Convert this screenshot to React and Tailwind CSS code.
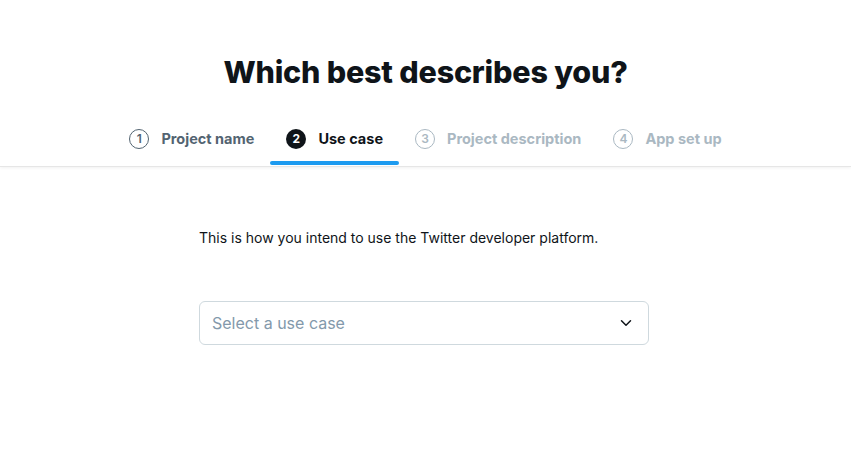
import { ChevronDown } from 'lucide-react';

const steps = [
  { n: 1, label: 'Project name', state: 'done' },
  { n: 2, label: 'Use case', state: 'active' },
  { n: 3, label: 'Project description', state: 'todo' },
  { n: 4, label: 'App set up', state: 'todo' },
];

function Step({ n, label, state }) {
  const active = state === 'active';
  const text = active ? 'text-[#0f1419]' : state === 'done' ? 'text-[#536471]' : 'text-[#aab8c2]';
  return (
    <div className="relative flex items-center gap-3 px-4 h-[54px]">
      {active ? (
        <span className="w-5 h-5 rounded-full bg-[#0f1419] text-white text-[12px] font-bold flex items-center justify-center">
          {n}
        </span>
      ) : (
        <span className={`w-5 h-5 rounded-full border-[1.5px] text-[12px] font-semibold flex items-center justify-center ${state === 'done' ? 'border-[#536471] text-[#536471]' : 'border-[#aab8c2] text-[#aab8c2]'}`}>
          {n}
        </span>
      )}
      <span className={`text-[14.5px] font-bold ${text}`}>{label}</span>
      {active && <div className="absolute left-0 right-0 bottom-[1px] h-[4px] rounded-full bg-[#1d9bf0]" />}
    </div>
  );
}

export default function App() {
  return (
    <div className="min-h-screen bg-white font-['Inter',sans-serif]">
      {/* Header */}
      <div className="border-b border-[#e6e6e6] shadow-[0_1px_3px_rgba(0,0,0,0.06)]">
        <h1 className="pt-[52px] text-center text-[30.5px] leading-[40px] font-extrabold text-[#0f1419] tracking-[-0.2px]">
          Which best describes you?
        </h1>
        <div className="mt-[20px] flex justify-center">
          {steps.map((s) => (
            <Step key={s.n} {...s} />
          ))}
        </div>
      </div>

      {/* Body */}
      <div className="w-[453px] pr-[3px] mx-auto pt-[61px]">
        <p className="text-[14px] text-[#0f1419] leading-5">
          This is how you intend to use the Twitter developer platform.
        </p>
        <button className="mt-[53px] w-full h-[44px] rounded-md border border-[#cfd9de] flex items-center justify-between pl-3 pr-[13px]">
          <span className="text-[16px] text-[#8399ab]">Select a use case</span>
          <ChevronDown className="w-[18px] h-[18px] text-[#0f1419]" strokeWidth={2} />
        </button>
      </div>
    </div>
  );
}
